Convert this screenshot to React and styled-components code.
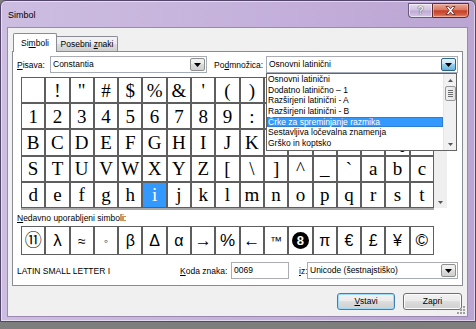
import React from 'react';
import styled, { createGlobalStyle, css } from 'styled-components';

const UI = `"Liberation Sans", Arial, sans-serif`;

const Global = createGlobalStyle`
  html, body { margin: 0; padding: 0; background: #7e7e7e; }
  body { width: 476px; height: 329px; overflow: hidden; font-family: ${UI}; }
  * { box-sizing: border-box; }
`;

const Window = styled.div`
  width: 476px;
  height: 322px;
  padding: 0 8px 5px 7px;
  display: flex;
  flex-direction: column;
  background: linear-gradient(90deg, #cdbde1 0%, #c6b3dc 45%, #bba5d3 100%);
  border: 1px solid #54456a;
  border-radius: 6px 6px 0 0;
  box-shadow: inset 0 0 0 1px rgba(255, 255, 255, 0.5);
`;

const TitleBar = styled.div`
  height: 27px;
  display: flex;
  justify-content: space-between;
  align-items: flex-start;
  flex: none;
`;

const Title = styled.div`
  margin-top: 8px;
  line-height: 12px;
  font-size: 9px;
  color: #000;
`;

const CaptionButtons = styled.div`
  display: flex;
  margin-top: 2px;
  margin-right: -2px;
`;

const HelpButton = styled.div`
  width: 24px;
  height: 15px;
  border: 1px solid #6b5a80;
  border-right: none;
  border-radius: 0 0 0 4px;
  background: linear-gradient(#e4daee, #d0c1e2 48%, #bfa9d6 52%, #d4c6e4);
  box-shadow: inset 0 0 0 1px rgba(255, 255, 255, 0.55);
  display: flex;
  align-items: center;
  justify-content: center;
  color: #f4f4f4;
  font: bold 10px ${UI};
  text-shadow: 0 0 1px #444, 0 0 1px #444;
`;

const CloseButton = styled.div`
  width: 37px;
  height: 15px;
  border: 1px solid #5e2e2e;
  border-radius: 0 0 4px 0;
  background: linear-gradient(#e9a898, #d9795f 45%, #c4402a 52%, #d35b3f 80%, #e48c6e);
  box-shadow: inset 0 0 0 1px rgba(255, 210, 200, 0.5);
  display: flex;
  align-items: center;
  justify-content: center;
`;

const Body = styled.div`
  flex: 1;
  position: relative;
  background: #f0f0f0;
  box-shadow: 0 0 0 1px #9a88b0;
  padding: 5px 4px 0 4px;
  display: flex;
  flex-direction: column;
`;

const TabRow = styled.div`
  height: 18px;
  display: flex;
  align-items: flex-end;
  padding-left: 1px;
  flex: none;
`;

const Tab = styled.div`
  font-size: 8.5px;
  text-align: center;
  color: #000;
  border: 1px solid #898c95;
  border-bottom: none;
  ${(p) =>
    p.$active
      ? css`
          width: 44px;
          height: 19px;
          line-height: 18px;
          margin-bottom: -1px;
          background: #fff;
          position: relative;
          z-index: 1;
          border-radius: 2px 2px 0 0;
        `
      : css`
          width: 61px;
          height: 15px;
          line-height: 15px;
          border-left: none;
          background: linear-gradient(#f3f3f3, #ebebeb 50%, #dddddd 51%, #cfcfcf);
          border-radius: 0 2px 0 0;
        `}
`;

const Panel = styled.div`
  height: 235px;
  flex: none;
  position: relative;
  background: #fff;
  border: 1px solid #898c95;
  display: flex;
  flex-direction: column;
`;

const Row = styled.div`
  display: flex;
  align-items: center;
  height: 17px;
  margin-top: ${(p) => p.$mt || 0}px;
  padding-left: 4px;
  flex: none;
`;

const Label = styled.div`
  font-size: 8.5px;
  color: #000;
  width: ${(p) => p.$w}px;
  margin-left: ${(p) => p.$ml || 0}px;
  white-space: nowrap;
  flex: none;
`;

const U = styled.span`
  text-decoration: underline;
`;

const Combo = styled.div`
  width: ${(p) => p.$w}px;
  height: 17px;
  flex: none;
  display: flex;
  align-items: stretch;
  background: #fff;
  border: 1px solid #a5acb5;
  border-top-color: #abadb3;
`;

const ComboText = styled.div`
  flex: 1;
  font-size: 8.5px;
  line-height: 15px;
  padding-left: 2px;
  color: #000;
  white-space: nowrap;
  overflow: hidden;
`;

const ArrowButton = styled.div`
  width: 15px;
  margin: 1px;
  display: flex;
  align-items: center;
  justify-content: center;
  border: 1px solid ${(p) => (p.$pressed ? '#2c628b' : '#8e8f8f')};
  border-radius: 2px;
  background: ${(p) =>
    p.$pressed
      ? 'linear-gradient(#e5f4fc, #c4e5f6 45%, #98d1ef 50%, #68b3db)'
      : 'linear-gradient(#f2f2f2, #ebebeb 45%, #dddddd 50%, #cfcfcf)'};
`;

const Input = styled.div`
  width: ${(p) => p.$w}px;
  height: 17px;
  flex: none;
  border: 1px solid #abadb3;
  background: #fff;
  font-size: 8.5px;
  line-height: 15px;
  padding-left: 2px;
`;

const GridArea = styled.div`
  display: flex;
  margin-top: 4px;
  padding-left: 8px;
  flex: none;
`;

const CharGrid = styled.div`
  width: 413px;
  height: ${(p) => p.$h}px;
  display: grid;
  grid-template-columns: repeat(17, 1fr);
  grid-template-rows: repeat(${(p) => p.$rows}, 1fr);
  gap: 2px;
  padding: 1px;
  background: #5e5e5e;
  box-shadow: ${(p) => (p.$shadow ? '0 2px 0 #a9a9a9' : 'none')};
`;

const Cell = styled.div`
  background: ${(p) => (p.$sel ? '#3399ff' : '#fff')};
  color: ${(p) => (p.$sel ? '#fff' : '#000')};
  display: flex;
  align-items: center;
  justify-content: center;
  font-family: ${(p) =>
    p.$sans
      ? `"Liberation Sans", "DejaVu Sans", "Noto Sans CJK SC", sans-serif`
      : `"Liberation Serif", "DejaVu Serif", serif`};
  font-size: ${(p) => p.$size || 19}px;
  line-height: 1;
  overflow: hidden;
`;

const Scroll = styled.div`
  width: 13px;
  height: 131px;
  background: #efefef;
  display: flex;
  flex-direction: column;
  justify-content: flex-end;
  align-items: center;
  padding-bottom: 4px;
`;

const RecentLabel = styled.div`
  font-size: 8.5px;
  line-height: 13px;
  margin-top: 4px;
  padding-left: 4px;
  flex: none;
`;

const RecentWrap = styled.div`
  margin-top: 1px;
  padding-left: 8px;
  flex: none;
`;

const BlackCircle = styled.span`
  width: 17px;
  height: 17px;
  border-radius: 50%;
  background: #000;
  color: #fff;
  display: flex;
  align-items: center;
  justify-content: center;
  font: bold 13px ${UI};
`;

const List = styled.div`
  position: absolute;
  left: 253px;
  top: 21px;
  width: 191px;
  height: 78px;
  background: #fff;
  border: 1px solid #646464;
  display: flex;
  z-index: 5;
`;

const ListItems = styled.div`
  flex: 1;
  display: flex;
  flex-direction: column;
`;

const ListItem = styled.div`
  height: 10.65px;
  line-height: 10.65px;
  font-size: 8.5px;
  padding-left: 1px;
  white-space: nowrap;
  background: ${(p) => (p.$sel ? '#3399ff' : 'transparent')};
  color: ${(p) => (p.$sel ? '#fff' : '#000')};
  box-shadow: ${(p) => (p.$sel ? 'inset 0 0 0 1px #2f7fd0' : 'none')};
`;

const ListScroll = styled.div`
  width: 13px;
  background: #f1f1f1;
  border-left: 1px solid #e6e6e6;
  display: flex;
  flex-direction: column;
  align-items: center;
  padding: 5px 0 4px;
`;

const Thumb = styled.div`
  width: 11px;
  height: 15px;
  margin-top: 4px;
  border: 1px solid #979797;
  border-radius: 2px;
  background: linear-gradient(90deg, #f1f1f1, #e4e4e4);
  display: flex;
  flex-direction: column;
  align-items: center;
  justify-content: center;
  gap: 1px;
`;

const Grip = styled.div`
  width: 5px;
  height: 1px;
  background: #6e6e6e;
`;

const Spacer = styled.div`
  flex: 1;
`;

const ButtonRow = styled.div`
  display: flex;
  justify-content: flex-end;
  gap: 8px;
  margin-top: 7px;
  margin-right: 1px;
  flex: none;
`;

const Button = styled.div`
  width: ${(p) => p.$w}px;
  height: 17px;
  border: 1px solid ${(p) => (p.$default ? '#3c7fb1' : '#707070')};
  border-radius: 3px;
  background: linear-gradient(#f2f2f2, #ebebeb 45%, #dddddd 50%, #cfcfcf);
  box-shadow: inset 0 0 0 1px ${(p) => (p.$default ? '#9fdaf8' : '#fcfcfc')};
  font-size: 8.5px;
  line-height: 15px;
  text-align: center;
  color: #000;
`;

const ResizeGrip = styled.svg`
  position: absolute;
  right: 1px;
  bottom: 1px;
`;

const Caret = ({ up, color = '#000' }) => (
  <svg width="7" height="4" viewBox="0 0 7 4">
    {up ? (
      <polygon points="0,4 7,4 3.5,0" fill={color} />
    ) : (
      <polygon points="0,0 7,0 3.5,4" fill={color} />
    )}
  </svg>
);

const SmallCaret = ({ up }) => (
  <svg width="5" height="3" viewBox="0 0 5 3">
    {up ? <polygon points="0,3 5,3 2.5,0" fill="#555" /> : <polygon points="0,0 5,0 2.5,3" fill="#555" />}
  </svg>
);

const chars = Array.from({ length: 85 }, (_, i) => String.fromCharCode(0x20 + i));
const recent = ['⑪', 'λ', '≈', '◦', 'β', 'Δ', 'α', '→', '%', '←', '™', '8', 'π', '€', '£', '¥', '©'];
const recentSizes = [17, 17, 14, 12, 16, 16, 16, 17, 17, 17, 12, 13, 16, 16, 16, 16, 17];

const subsets = [
  'Osnovni latinični',
  'Dodatno latinično – 1',
  'Razširjeni latinični - A',
  'Razširjeni latinični - B',
  'Črke za spreminjanje razmika',
  'Sestavljiva ločevalna znamenja',
  'Grško in koptsko',
];

export default function App() {
  return (
    <>
      <Global />
      <Window>
        <TitleBar>
          <Title>Simbol</Title>
          <CaptionButtons>
            <HelpButton>?</HelpButton>
            <CloseButton>
              <svg width="11" height="9" viewBox="0 0 11 9">
                <path
                  d="M1 0.5 L3.5 0.5 L5.5 2.8 L7.5 0.5 L10 0.5 L6.9 4.5 L10 8.5 L7.5 8.5 L5.5 6.2 L3.5 8.5 L1 8.5 L4.1 4.5 Z"
                  fill="#fff"
                  stroke="#5a2020"
                  strokeWidth="0.8"
                />
              </svg>
            </CloseButton>
          </CaptionButtons>
        </TitleBar>
        <Body>
          <TabRow>
            <Tab $active>
              Si<U>m</U>boli
            </Tab>
            <Tab>
              Posebni <U>z</U>naki
            </Tab>
          </TabRow>
          <Panel>
            <Row $mt={4}>
              <Label $w={33}>
                <U>P</U>isava:
              </Label>
              <Combo $w={157}>
                <ComboText>Constantia</ComboText>
                <ArrowButton>
                  <Caret />
                </ArrowButton>
              </Combo>
              <Label $w={52} $ml={7}>
                Po<U>d</U>množica:
              </Label>
              <Combo $w={192}>
                <ComboText>Osnovni latinični</ComboText>
                <ArrowButton $pressed>
                  <Caret />
                </ArrowButton>
              </Combo>
            </Row>
            <GridArea>
              <CharGrid $h={131} $rows={5} $shadow>
                {chars.map((c, i) => (
                  <Cell key={i} $sel={c === 'i'}>
                    {c}
                  </Cell>
                ))}
              </CharGrid>
              <Scroll>
                <SmallCaret />
              </Scroll>
            </GridArea>
            <RecentLabel>
              <U>N</U>edavno uporabljeni simboli:
            </RecentLabel>
            <RecentWrap>
              <CharGrid $h={29} $rows={1}>
                {recent.map((c, i) => (
                  <Cell key={i} $sans $size={recentSizes[i]}>
                    {i === 11 ? <BlackCircle>{c}</BlackCircle> : c}
                  </Cell>
                ))}
              </CharGrid>
            </RecentWrap>
            <Row $mt={7}>
              <Label $w={163}>LATIN SMALL LETTER I</Label>
              <Label $w={51}>
                <U>K</U>oda znaka:
              </Label>
              <Input $w={58}>0069</Input>
              <Label $w={8} $ml={10}>
                <U>i</U>z:
              </Label>
              <Combo $w={151}>
                <ComboText>Unicode (šestnajstiško)</ComboText>
                <ArrowButton>
                  <Caret />
                </ArrowButton>
              </Combo>
            </Row>
            <List>
              <ListItems>
                {subsets.map((s, i) => (
                  <ListItem key={s} $sel={i === 4}>
                    {s}
                  </ListItem>
                ))}
              </ListItems>
              <ListScroll>
                <SmallCaret up />
                <Thumb>
                  <Grip />
                  <Grip />
                  <Grip />
                  <Grip />
                </Thumb>
                <Spacer />
                <SmallCaret />
              </ListScroll>
            </List>
          </Panel>
          <ButtonRow>
            <Button $w={58} $default>
              <U>V</U>stavi
            </Button>
            <Button $w={59}>Zapri</Button>
          </ButtonRow>
          <ResizeGrip width="10" height="10" viewBox="0 0 10 10">
            {[
              [8, 2],
              [8, 5],
              [5, 5],
              [8, 8],
              [5, 8],
              [2, 8],
            ].map(([x, y], i) => (
              <rect key={i} x={x - 1} y={y - 1} width="2" height="2" fill="#a0a0a0" />
            ))}
          </ResizeGrip>
        </Body>
      </Window>
    </>
  );
}
